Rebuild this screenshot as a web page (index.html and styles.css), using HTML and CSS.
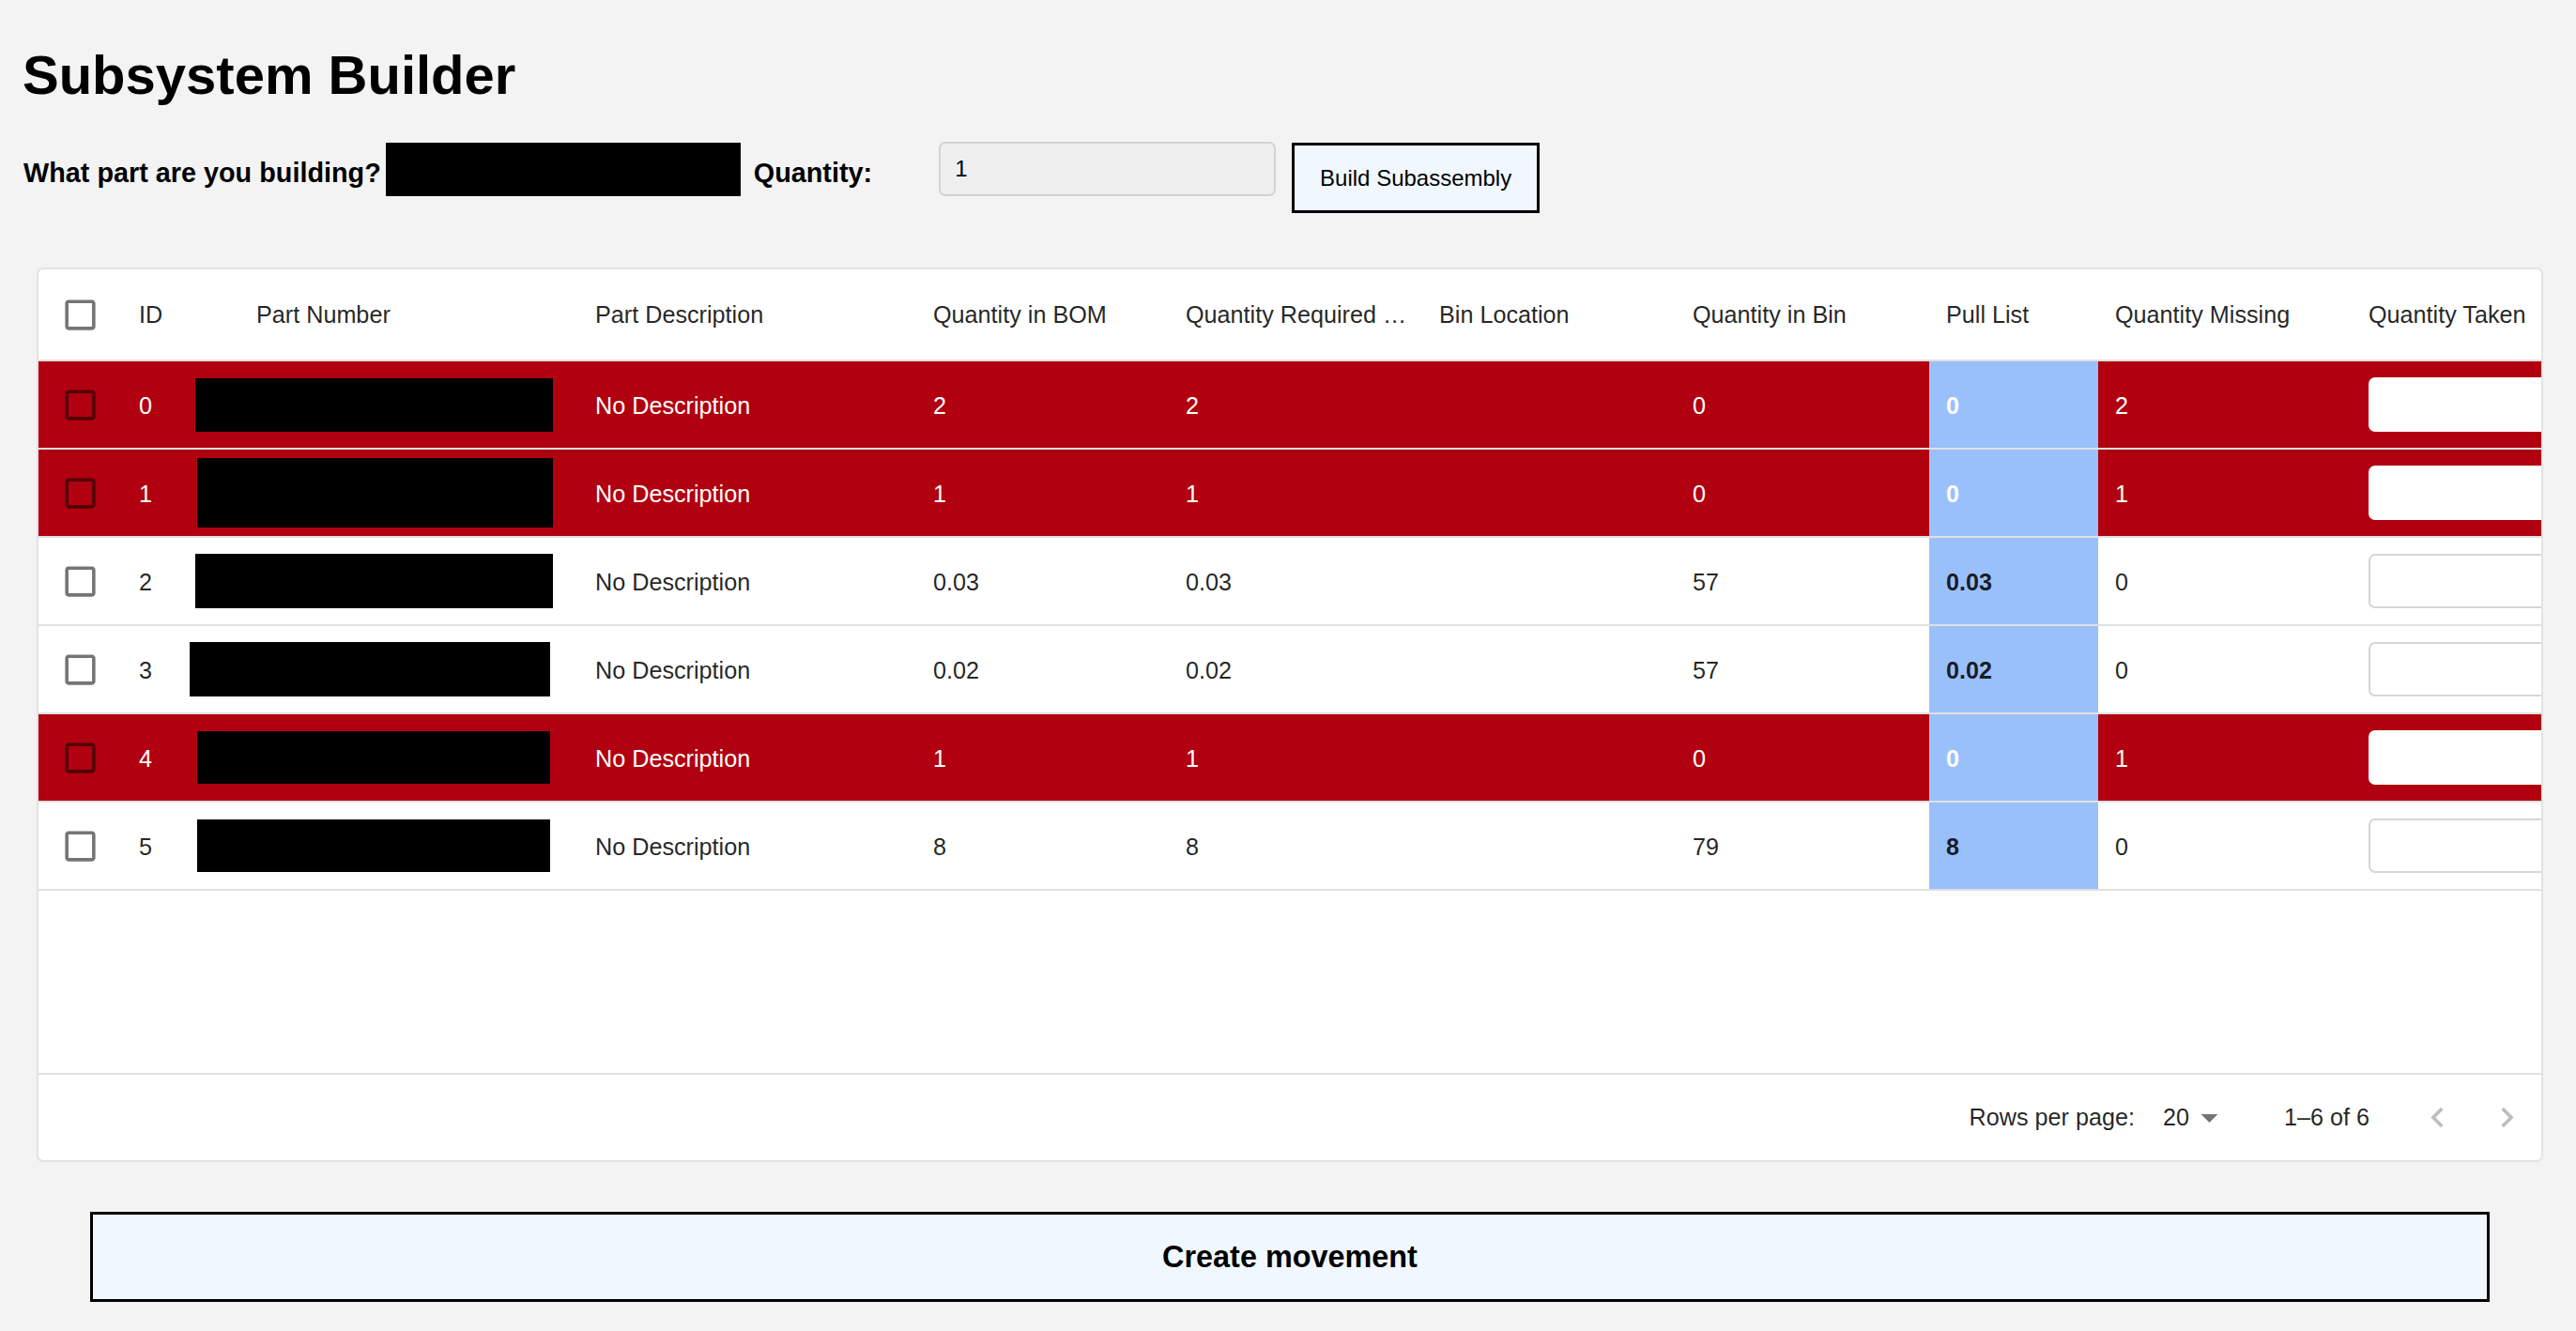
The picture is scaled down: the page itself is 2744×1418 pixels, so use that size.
FILE: index.html
```html
<!DOCTYPE html>
<html lang="en">
<head>
<meta charset="utf-8">
<title>Subsystem Builder</title>
<link rel="stylesheet" href="styles.css">
</head>
<body>
<div class="page">
  <h1 class="title">Subsystem Builder</h1>

  <div class="ask-row">
    <span class="ask-label">What part are you building?</span>
    <div class="redact-top"></div>
    <span class="ask-label qty-label">Quantity:</span>
    <input class="qty-input" type="text" value="1">
    <button class="build-btn" type="button">Build Subassembly</button>
  </div>

  <div class="grid-card">
    <div class="grid-row header-row">
      <div class="cell cb-cell">
        <svg class="cb" viewBox="0 0 24 24"><path d="M19 5v14H5V5h14m0-2H5c-1.11 0-2 .9-2 2v14c0 1.1.89 2 2 2h14c1.1 0 2-.9 2-2V5c0-1.1-.9-2-2-2z"/></svg>
      </div>
      <div class="cell">ID</div>
      <div class="cell hd-part">Part Number</div>
      <div class="cell">Part Description</div>
      <div class="cell">Quantity in BOM</div>
      <div class="cell">Quantity Required …</div>
      <div class="cell">Bin Location</div>
      <div class="cell">Quantity in Bin</div>
      <div class="cell">Pull List</div>
      <div class="cell">Quantity Missing</div>
      <div class="cell">Quantity Taken</div>
    </div>

    <div class="grid-body">
      <div class="grid-row data-row missing">
        <div class="cell cb-cell"><svg class="cb" viewBox="0 0 24 24"><path d="M19 5v14H5V5h14m0-2H5c-1.11 0-2 .9-2 2v14c0 1.1.89 2 2 2h14c1.1 0 2-.9 2-2V5c0-1.1-.9-2-2-2z"/></svg></div>
        <div class="cell">0</div>
        <div class="cell part-cell"><div class="redact r0"></div></div>
        <div class="cell">No Description</div>
        <div class="cell">2</div>
        <div class="cell">2</div>
        <div class="cell"></div>
        <div class="cell">0</div>
        <div class="cell pull">0</div>
        <div class="cell">2</div>
        <div class="cell taken"><input class="taken-input" type="text"></div>
      </div>

      <div class="grid-row data-row missing">
        <div class="cell cb-cell"><svg class="cb" viewBox="0 0 24 24"><path d="M19 5v14H5V5h14m0-2H5c-1.11 0-2 .9-2 2v14c0 1.1.89 2 2 2h14c1.1 0 2-.9 2-2V5c0-1.1-.9-2-2-2z"/></svg></div>
        <div class="cell">1</div>
        <div class="cell part-cell"><div class="redact r1"></div></div>
        <div class="cell">No Description</div>
        <div class="cell">1</div>
        <div class="cell">1</div>
        <div class="cell"></div>
        <div class="cell">0</div>
        <div class="cell pull">0</div>
        <div class="cell">1</div>
        <div class="cell taken"><input class="taken-input" type="text"></div>
      </div>

      <div class="grid-row data-row">
        <div class="cell cb-cell"><svg class="cb" viewBox="0 0 24 24"><path d="M19 5v14H5V5h14m0-2H5c-1.11 0-2 .9-2 2v14c0 1.1.89 2 2 2h14c1.1 0 2-.9 2-2V5c0-1.1-.9-2-2-2z"/></svg></div>
        <div class="cell">2</div>
        <div class="cell part-cell"><div class="redact r2"></div></div>
        <div class="cell">No Description</div>
        <div class="cell">0.03</div>
        <div class="cell">0.03</div>
        <div class="cell"></div>
        <div class="cell">57</div>
        <div class="cell pull">0.03</div>
        <div class="cell">0</div>
        <div class="cell taken"><input class="taken-input" type="text"></div>
      </div>

      <div class="grid-row data-row">
        <div class="cell cb-cell"><svg class="cb" viewBox="0 0 24 24"><path d="M19 5v14H5V5h14m0-2H5c-1.11 0-2 .9-2 2v14c0 1.1.89 2 2 2h14c1.1 0 2-.9 2-2V5c0-1.1-.9-2-2-2z"/></svg></div>
        <div class="cell">3</div>
        <div class="cell part-cell"><div class="redact r3"></div></div>
        <div class="cell">No Description</div>
        <div class="cell">0.02</div>
        <div class="cell">0.02</div>
        <div class="cell"></div>
        <div class="cell">57</div>
        <div class="cell pull">0.02</div>
        <div class="cell">0</div>
        <div class="cell taken"><input class="taken-input" type="text"></div>
      </div>

      <div class="grid-row data-row missing">
        <div class="cell cb-cell"><svg class="cb" viewBox="0 0 24 24"><path d="M19 5v14H5V5h14m0-2H5c-1.11 0-2 .9-2 2v14c0 1.1.89 2 2 2h14c1.1 0 2-.9 2-2V5c0-1.1-.9-2-2-2z"/></svg></div>
        <div class="cell">4</div>
        <div class="cell part-cell"><div class="redact r4"></div></div>
        <div class="cell">No Description</div>
        <div class="cell">1</div>
        <div class="cell">1</div>
        <div class="cell"></div>
        <div class="cell">0</div>
        <div class="cell pull">0</div>
        <div class="cell">1</div>
        <div class="cell taken"><input class="taken-input" type="text"></div>
      </div>

      <div class="grid-row data-row">
        <div class="cell cb-cell"><svg class="cb" viewBox="0 0 24 24"><path d="M19 5v14H5V5h14m0-2H5c-1.11 0-2 .9-2 2v14c0 1.1.89 2 2 2h14c1.1 0 2-.9 2-2V5c0-1.1-.9-2-2-2z"/></svg></div>
        <div class="cell">5</div>
        <div class="cell part-cell"><div class="redact r4"></div></div>
        <div class="cell">No Description</div>
        <div class="cell">8</div>
        <div class="cell">8</div>
        <div class="cell"></div>
        <div class="cell">79</div>
        <div class="cell pull">8</div>
        <div class="cell">0</div>
        <div class="cell taken"><input class="taken-input" type="text"></div>
      </div>
    </div>

    <div class="grid-footer">
      <span class="rows-label">Rows per page:</span>
      <span class="rows-select">20<svg class="drop" viewBox="0 0 24 24"><path d="M7 10l5 5 5-5z"/></svg></span>
      <span class="rows-range">1–6 of 6</span>
      <span class="page-btn"><svg class="arrow" viewBox="0 0 24 24"><path d="M15.41 16.59L10.83 12l4.58-4.59L14 6l-6 6 6 6 1.41-1.41z"/></svg></span>
      <span class="page-btn"><svg class="arrow" viewBox="0 0 24 24"><path d="M8.59 16.59L13.17 12 8.59 7.41 10 6l6 6-6 6-1.41-1.41z"/></svg></span>
    </div>
  </div>

  <button class="create-btn" type="button">Create movement</button>
</div>
</body>
</html>
```

FILE: styles.css
```css
* { box-sizing: border-box; }

html, body {
  margin: 0;
  padding: 0;
  background: #f3f3f3;
}

body {
  font-family: "Liberation Sans", Arial, Helvetica, sans-serif;
  color: #000;
  overflow: hidden;
}

.page {
  display: flex;
  flex-direction: column;
  align-items: flex-start;
}

.title {
  margin: 47px 0 0 24px;
  font-size: 58px;
  line-height: 65px;
  font-weight: 700;
}

.ask-row {
  display: flex;
  align-items: flex-start;
  margin: 39px 0 0 25px;
}

.ask-label {
  margin-top: 17px;
  font-size: 28.8px;
  line-height: 33px;
  font-weight: 700;
  white-space: nowrap;
}

.redact-top {
  width: 378px;
  height: 57px;
  margin: 1px 0 0 5px;
  background: #000;
}

.qty-label {
  margin-left: 14px;
}

.qty-input {
  width: 359px;
  height: 58px;
  margin-left: 71px;
  padding: 0 0 0 15px;
  border: 2px solid #d3d3d3;
  border-radius: 7px;
  background: #efefef;
  font-family: "Liberation Sans", Arial, sans-serif;
  font-size: 24px;
  color: #000;
}

.build-btn {
  width: 264px;
  height: 75px;
  margin: 1px 0 0 17px;
  padding: 0;
  border: 3px solid #000;
  background: #f0f7ff;
  font-family: "Liberation Sans", Arial, sans-serif;
  font-size: 24px;
  color: #000;
}

.grid-card {
  width: 2670px;
  margin: 58px 0 0 39px;
  border: 2px solid #e3e3e3;
  border-radius: 7px;
  background: #fff;
  overflow: hidden;
  display: flex;
  flex-direction: column;
  font-size: 25.2px;
  color: rgba(0, 0, 0, 0.87);
}

.grid-row {
  display: grid;
  grid-template-columns: 89px 125px 361px 360px 269px 270px 270px 270px 180px 270px 270px;
  border-bottom: 2px solid #e0e0e0;
}

.header-row {
  height: 98px;
}

.data-row {
  height: 94px;
}

.cell {
  display: flex;
  align-items: center;
  padding-left: 18px;
  padding-top: 2px;
  white-space: nowrap;
  overflow: visible;
}

.header-row .cell {
  padding-top: 0;
}

.cb-cell {
  padding-left: 0;
  padding-top: 0;
  justify-content: center;
}

.cb {
  width: 43px;
  height: 43px;
  fill: rgba(0, 0, 0, 0.54);
}

.missing {
  background: #b1000f;
  color: #fff;
}

.pull {
  background: #9ac0fc;
  font-weight: 700;
}

.part-cell {
  padding-left: 0;
  padding-top: 0;
}

.redact {
  background: #000;
  flex: none;
  margin-left: -47px;
  width: 381px;
  height: 57px;
}

.redact.r1 {
  margin-left: -45px;
  width: 379px;
  height: 74px;
}

.redact.r2 {
  height: 58px;
}

.redact.r3 {
  margin-left: -53px;
  width: 384px;
  height: 58px;
}

.redact.r4 {
  margin-left: -45px;
  width: 376px;
  height: 56px;
}

.taken {
  padding-top: 0;
}

.taken-input {
  flex: none;
  width: 250px;
  height: 58px;
  border: 2px solid #d6d6d6;
  border-radius: 7px;
  background: #fff;
}

.missing .taken-input {
  border-color: #fff;
}

.grid-body {
  height: 758px;
}

.grid-footer {
  height: 93px;
  border-top: 2px solid #e0e0e0;
  display: flex;
  align-items: center;
  justify-content: flex-end;
}

.rows-label {
  margin-right: 30px;
}

.rows-select {
  display: flex;
  align-items: center;
}

.drop {
  width: 43px;
  height: 43px;
  fill: rgba(0, 0, 0, 0.54);
  margin-right: 58px;
}

.rows-range {
  margin-right: 35px;
}

.page-btn {
  width: 74px;
  height: 74px;
  display: flex;
  align-items: center;
  justify-content: center;
}

.arrow {
  width: 43px;
  height: 43px;
  fill: rgba(0, 0, 0, 0.26);
}

.create-btn {
  width: 2556px;
  height: 96px;
  margin: 53px 0 0 96px;
  padding: 0;
  border: 3px solid #000;
  background: #f0f7ff;
  font-family: "Liberation Sans", Arial, sans-serif;
  font-size: 32.4px;
  font-weight: 700;
  color: #000;
}
```
